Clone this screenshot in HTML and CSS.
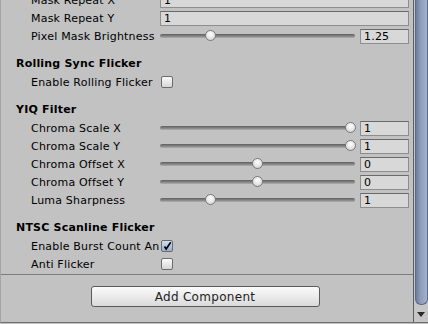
FILE: index.html
```html
<!DOCTYPE html>
<html lang="en">
<head>
  <meta charset="UTF-8" />
  <meta name="viewport" content="width=device-width, initial-scale=1.0"/>
  <title>Inspector</title>
  <link rel="stylesheet" href="styles.css">
</head>
<body>
  <div class="inspector">
    <div class="panel">
      <div class="props">
        <div class="row"><span class="label">Mask Repeat X</span><span class="field">1</span></div>
        <div class="row"><span class="label">Mask Repeat Y</span><span class="field">1</span></div>
        <div class="row">
          <span class="label">Pixel Mask Brightness</span>
          <div class="slider"><div class="track"><span class="knob" style="--p: 0.245"></span></div></div>
          <span class="field num">1.25</span>
        </div>

        <div class="heading">Rolling Sync Flicker</div>
        <div class="row"><span class="label">Enable Rolling Flicker</span><span class="checkbox"></span></div>

        <div class="heading">YIQ Filter</div>
        <div class="row">
          <span class="label">Chroma Scale X</span>
          <div class="slider"><div class="track"><span class="knob" style="--p: 1"></span></div></div>
          <span class="field num">1</span>
        </div>
        <div class="row">
          <span class="label">Chroma Scale Y</span>
          <div class="slider"><div class="track"><span class="knob" style="--p: 1"></span></div></div>
          <span class="field num">1</span>
        </div>
        <div class="row">
          <span class="label">Chroma Offset X</span>
          <div class="slider"><div class="track"><span class="knob" style="--p: 0.5"></span></div></div>
          <span class="field num">0</span>
        </div>
        <div class="row">
          <span class="label">Chroma Offset Y</span>
          <div class="slider"><div class="track"><span class="knob" style="--p: 0.5"></span></div></div>
          <span class="field num">0</span>
        </div>
        <div class="row">
          <span class="label">Luma Sharpness</span>
          <div class="slider"><div class="track"><span class="knob" style="--p: 0.245"></span></div></div>
          <span class="field num">1</span>
        </div>

        <div class="heading">NTSC Scanline Flicker</div>
        <div class="row">
          <span class="label">Enable Burst Count Animation</span>
          <span class="checkbox checked">
            <svg width="12" height="12" viewBox="0 0 12 12"><path d="M3 6.5 L5 9.5 L10.5 1.5" fill="none" stroke="#000" stroke-width="2"/></svg>
          </span>
        </div>
        <div class="row"><span class="label">Anti Flicker</span><span class="checkbox"></span></div>
      </div>
      <div class="footer">
        <button class="add-btn">Add Component</button>
      </div>
    </div>
    <div class="scrollbar">
      <div class="scroll-thumb"></div>
      <div class="scroll-arrow"></div>
    </div>
  </div>
</body>
</html>
```

FILE: styles.css
```css
body {
  margin: 0;
  background: #c2c2c2;
  font-family: "DejaVu Sans", sans-serif;
  font-size: 11px;
  letter-spacing: 0.2px;
  color: #000;
  overflow: hidden;
}
.inspector {
  display: flex;
  height: 322px;
  border-left: 1px solid #a4a4a4;
  border-bottom: 1px solid #6e6e6e;
  overflow: hidden;
}
.panel {
  flex: 1;
  display: flex;
  flex-direction: column;
  overflow: hidden;
}
.props {
  margin-top: -9px;
  padding-bottom: 1px;
  border-bottom: 1px solid #7d7d7d;
}
.row {
  display: flex;
  align-items: center;
  height: 18px;
  padding-left: 30px;
  padding-right: 4px;
}
.label {
  width: 129px;
  flex: none;
  white-space: nowrap;
  overflow: hidden;
}
.heading {
  height: 18px;
  line-height: 18px;
  margin-top: 10px;
  padding-left: 15px;
  font-weight: bold;
}
.field {
  flex: 1;
  height: 15px;
  line-height: 13px;
  box-sizing: border-box;
  padding-left: 3px;
  background: #d8d8d8;
  border: 1px solid #8e8e8e;
  border-top-color: #6a6a6a;
}
.field.num {
  flex: none;
  width: 49px;
  margin-left: 5px;
}
.slider {
  flex: 1;
  display: flex;
  align-items: center;
  height: 18px;
}
.track {
  position: relative;
  flex: 1;
  height: 4px;
  border-radius: 2px;
  background: linear-gradient(#5e5e5e, #8a8a8a 60%, #b0b0b0);
}
.knob {
  position: absolute;
  top: -4px;
  left: calc(5px + (100% - 10px) * var(--p));
  width: 11px;
  height: 11px;
  box-sizing: border-box;
  margin-left: -5.5px;
  border-radius: 50%;
  border: 1px solid #7a7a7a;
  background: radial-gradient(circle at 50% 35%, #ffffff, #e2e2e2 60%, #c4c4c4);
}
.checkbox {
  width: 12px;
  height: 12px;
  box-sizing: border-box;
  margin-left: 1px;
  border: 1px solid #6b6b6b;
  border-radius: 2px;
  background: linear-gradient(#fafafa, #d6d6d6);
  display: flex;
}
.checkbox.checked {
  background: linear-gradient(#d2dff2, #98aed0);
}
.checkbox svg {
  margin: -1px 0 0 0;
}
.footer {
  display: flex;
  justify-content: center;
  padding-top: 11px;
}
.add-btn {
  width: 229px;
  height: 21px;
  font-family: "DejaVu Sans", sans-serif;
  font-size: 12px;
  letter-spacing: 0.3px;
  color: #1e1e1e;
  border: 1px solid #5a5a5a;
  border-radius: 3px;
  background: linear-gradient(#fbfbfb, #dadada);
  padding: 0;
  margin-right: 4px;
}
.scrollbar {
  width: 14px;
  flex: none;
  border-left: 1px solid #5e5e5e;
  background: #c6c6c6;
  display: flex;
  flex-direction: column;
  align-items: center;
}
.scroll-thumb {
  width: 13px;
  height: 305px;
  box-sizing: border-box;
  border: 1px solid #5a6a88;
  border-top: none;
  border-radius: 0 0 6px 6px;
  background: linear-gradient(90deg, #6b7c9c, #8d9dba 40%, #a3b2cc);
}
.scroll-arrow {
  margin-top: 7px;
  width: 0;
  height: 0;
  border-left: 4px solid transparent;
  border-right: 4px solid transparent;
  border-top: 5px solid #2a2a2a;
}
```
